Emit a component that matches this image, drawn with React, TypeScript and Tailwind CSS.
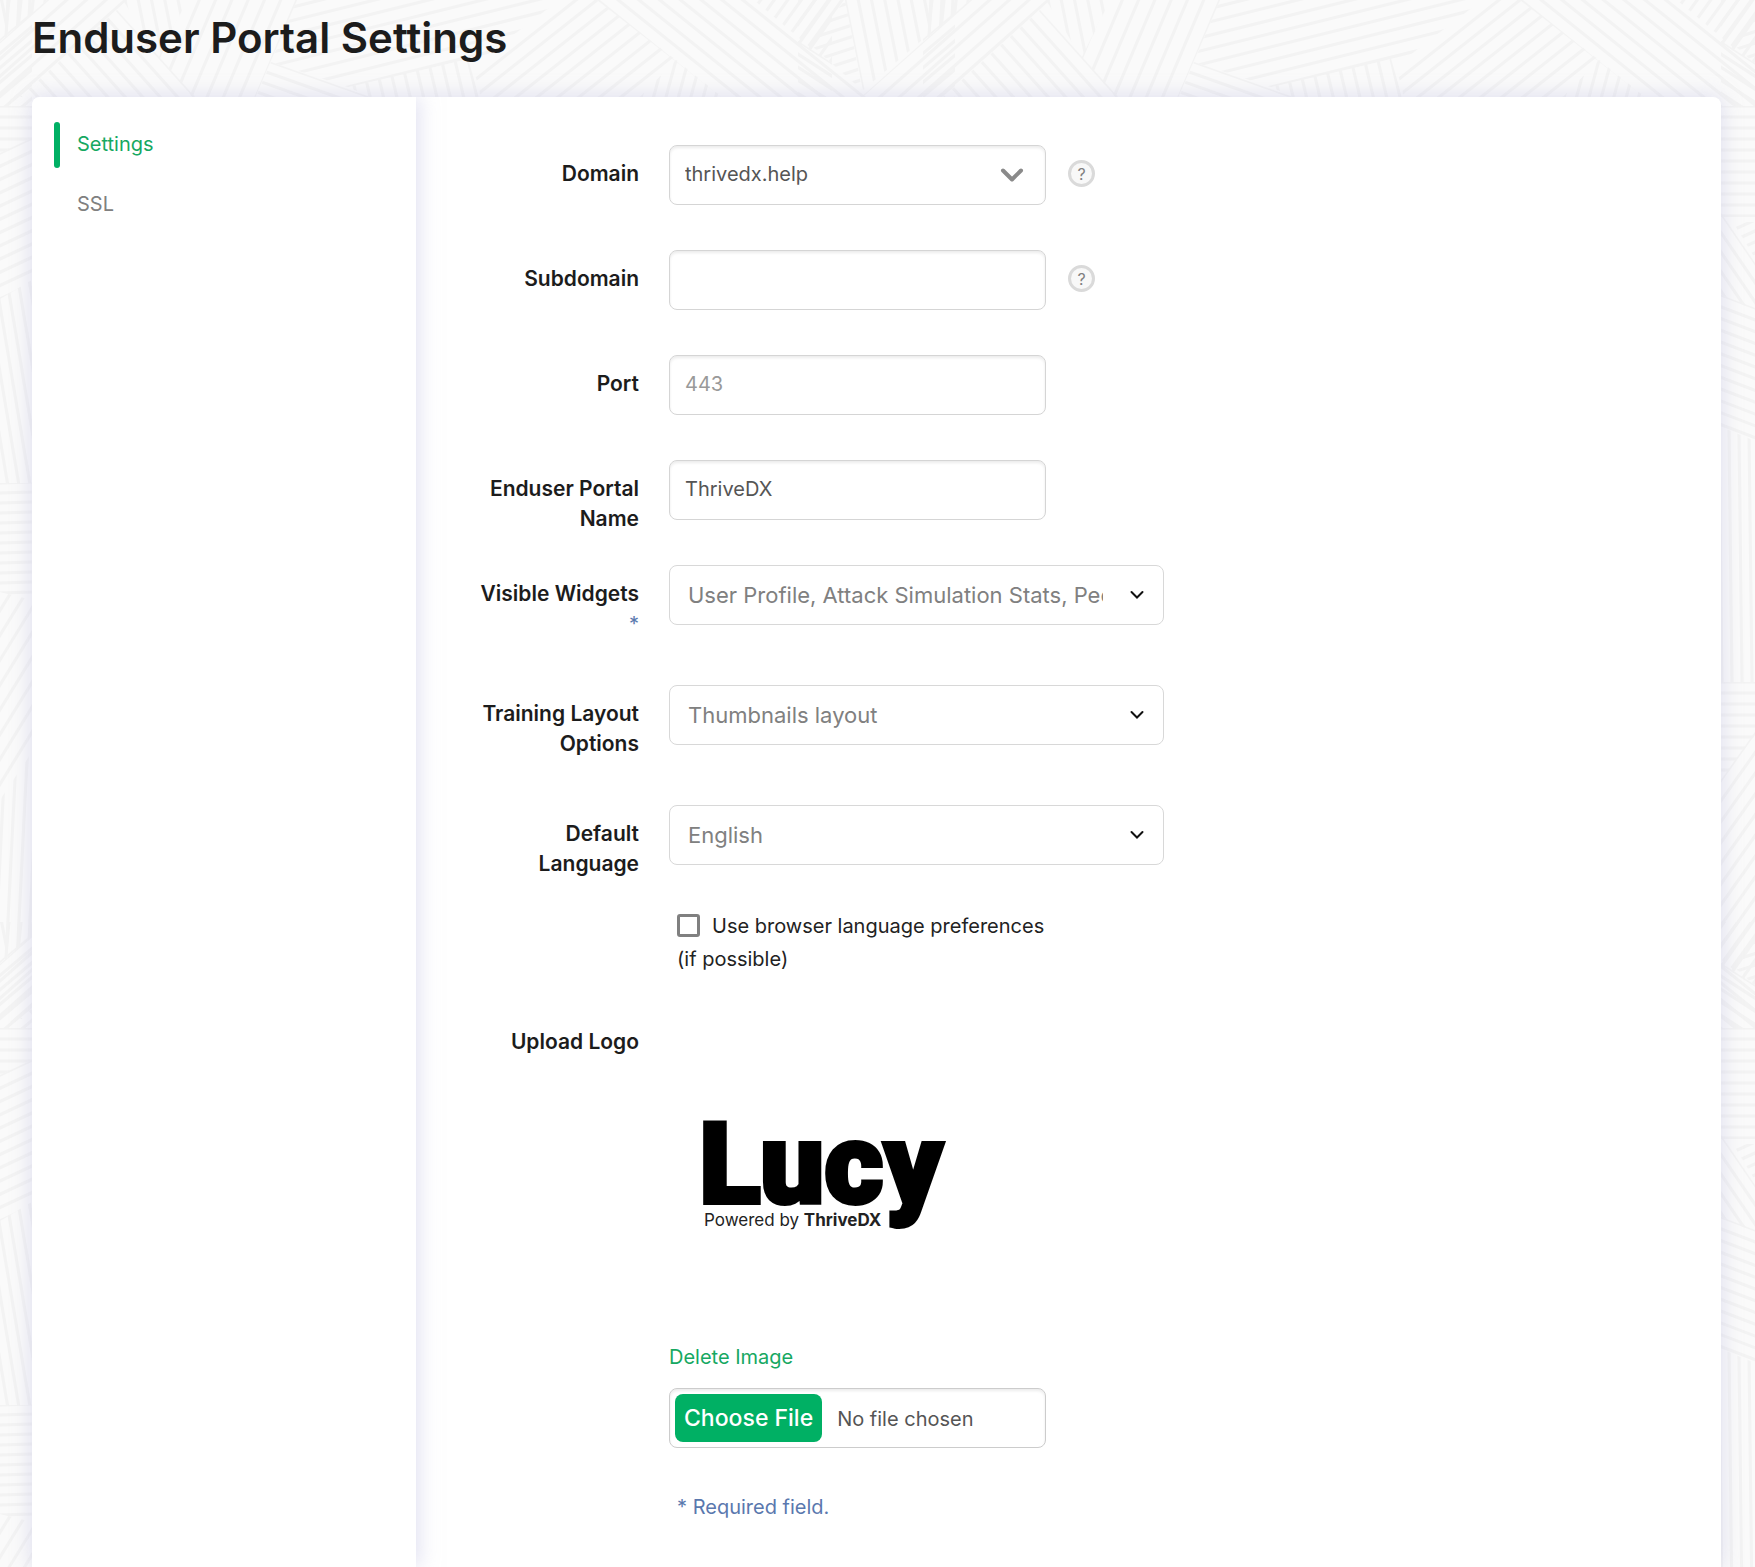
import type { ReactNode } from "react";

type Point = [number, number];

interface Region {
  points: Point[];
  direction: [Point, Point];
  gap: number;
}

const TILE_WIDTH = 923;
const TILE_HEIGHT = 922;

/* Hatched regions of the backdrop: an outline, one line that sets the slope, and the spacing. */
const regions: Region[] = [
  { points: [[481, 97], [474, 70], [559, 0], [597, 0], [676, 60], [640, 97]], direction: [[597, 0], [478, 94]], gap: 13 },
  { points: [[640, 97], [676, 60], [722, 97]], direction: [[676, 60], [666, 97]], gap: 12 },
  { points: [[597, 0], [754, 0], [866, 92], [866, 106], [733, 106]], direction: [[600, 2], [722, 100]], gap: 13 },
  { points: [[754, 0], [845, 0], [811, 48]], direction: [[811, 43], [842, 0]], gap: 11 },
  { points: [[845, 0], [862, 90], [811, 45]], direction: [[811, 50], [851, 37]], gap: 11 },
  { points: [[845, 0], [932, 0], [928, 35], [863, 90]], direction: [[845, 0], [863, 90]], gap: 13 },
  { points: [[932, 0], [970, 0], [928, 38]], direction: [[932, 0], [928, 38]], gap: 12 },
  { points: [[970, 0], [1050, 0], [940, 100], [858, 100]], direction: [[970, 0], [866, 92]], gap: 13 },
  { points: [[1040, 10], [1118, 97], [943, 97]], direction: [[1040, 10], [1118, 97]], gap: 13 },
  { points: [[1046, 0], [1110, 0], [1082, 58]], direction: [[1048, 0], [1053, 25]], gap: 13 },
  { points: [[1110, 0], [1220, 0], [1177, 100], [1118, 100], [1082, 57]], direction: [[1220, 0], [1179, 97]], gap: 15 },
  { points: [[1220, 0], [1482, 0], [1410, 55], [1271, 87], [1194, 62]], direction: [[1412, 52], [1271, 87]], gap: 13 },
  { points: [[1194, 62], [1293, 97], [1179, 97]], direction: [[1194, 62], [1293, 97]], gap: 11 },
  { points: [[1271, 87], [1391, 59], [1402, 97], [1293, 97]], direction: [[1391, 59], [1400, 97]], gap: 13 },
  { points: [[923, 106], [955, 106], [955, 138], [923, 153]], direction: [[923, 106], [955, 106]], gap: 11 },
  { points: [[923, 153], [955, 138], [955, 280], [923, 299]], direction: [[923, 153], [955, 138]], gap: 12 },
  { points: [[923, 299], [955, 280], [955, 483], [923, 483]], direction: [[932, 293], [955, 430]], gap: 11 },
  { points: [[923, 483], [955, 483], [955, 600], [923, 592]], direction: [[923, 483], [955, 482]], gap: 10 },
  { points: [[923, 592], [955, 600], [955, 752], [923, 800]], direction: [[923, 660], [955, 608]], gap: 13 },
  { points: [[923, 800], [955, 752], [955, 934], [923, 961]], direction: [[949, 780], [941, 940]], gap: 11 },
  { points: [[923, 961], [955, 934], [955, 1028], [923, 1028]], direction: [[923, 961], [955, 934]], gap: 11 },
  { points: [[798, 106], [832, 106], [832, 217], [798, 217]], direction: [[798, 106], [832, 106]], gap: 11 },
  { points: [[798, 213], [832, 263], [832, 310], [798, 295]], direction: [[798, 213], [830, 260]], gap: 11 },
  { points: [[810, 222], [832, 222], [832, 258]], direction: [[810, 230], [832, 220]], gap: 10 },
  { points: [[798, 295], [832, 308], [832, 441], [798, 427]], direction: [[798, 295], [832, 308]], gap: 11 },
  { points: [[798, 427], [832, 441], [832, 682], [798, 682]], direction: [[806, 432], [809, 682]], gap: 10 },
  { points: [[798, 682], [832, 682], [832, 735], [798, 780]], direction: [[798, 682], [832, 682]], gap: 11 },
  { points: [[798, 780], [832, 732], [832, 985], [798, 965]], direction: [[798, 780], [832, 732]], gap: 12 },
  { points: [[798, 963], [832, 985], [832, 1028], [798, 1028]], direction: [[798, 963], [832, 985]], gap: 11 },
];

const toPoints = (points: Point[]) => points.map((p) => p.join(",")).join(" ");

function HatchLines({ region }: { region: Region }) {
  const [[x0, y0], [x1, y1]] = region.direction;
  const length = Math.hypot(x1 - x0, y1 - y0);
  const ux = (x1 - x0) / length;
  const uy = (y1 - y0) / length;
  const steps = Array.from({ length: 61 }, (_, i) => i - 30);
  const d = steps
    .map((k) => {
      const cx = x0 - uy * k * region.gap;
      const cy = y0 + ux * k * region.gap;
      return `M${cx - ux * 400} ${cy - uy * 400}L${cx + ux * 400} ${cy + uy * 400}`;
    })
    .join("");
  return <path d={d} stroke="#f3f3f3" strokeWidth={3} fill="none" />;
}

function Backdrop() {
  return (
    <svg className="absolute inset-0 -z-10 h-full w-full" aria-hidden="true">
      <defs>
        {regions.map((region, i) => (
          <clipPath id={`region-${i}`} key={i}>
            <polygon points={toPoints(region.points)} />
          </clipPath>
        ))}
        <g id="hatching">
          {regions.map((region, i) => (
            <g key={i} clipPath={`url(#region-${i})`}>
              <HatchLines region={region} />
            </g>
          ))}
        </g>
        <pattern id="tile" width={TILE_WIDTH} height={TILE_HEIGHT} patternUnits="userSpaceOnUse">
          <rect width={TILE_WIDTH} height={TILE_HEIGHT} fill="#fafafa" />
          <use href="#hatching" />
          <use href="#hatching" x={-TILE_WIDTH} />
          <use href="#hatching" y={-TILE_HEIGHT} />
          <use href="#hatching" x={-TILE_WIDTH} y={-TILE_HEIGHT} />
        </pattern>
      </defs>
      <rect width="100%" height="100%" fill="url(#tile)" />
    </svg>
  );
}

function Chevron({ bold = false }: { bold?: boolean }) {
  return bold ? (
    <svg
      className="pointer-events-none absolute top-[23px] right-[22px] h-[14px] w-[24px]"
      viewBox="0 0 24 14"
      fill="none"
      stroke="#8a8a8a"
      strokeWidth={4}
      strokeLinecap="round"
      strokeLinejoin="round"
      aria-hidden="true"
    >
      <path d="M3 2.5l9 9 9-9" />
    </svg>
  ) : (
    <svg
      className="pointer-events-none absolute top-[25px] right-[20px] h-[10px] w-[14px]"
      viewBox="0 0 14 10"
      fill="none"
      stroke="#111111"
      strokeWidth={2}
      strokeLinecap="round"
      aria-hidden="true"
    >
      <path d="M1.5 2l5.5 5.5L12.5 2" />
    </svg>
  );
}

function HelpButton({ topic }: { topic: string }) {
  return (
    <button
      type="button"
      aria-label={`Help: ${topic}`}
      className="mt-[15px] ml-[22px] flex size-[27px] items-center justify-center rounded-full border-[3px] border-[#dadada] bg-[#f8f8f8] text-base text-[#808080]"
    >
      ?
    </button>
  );
}

const inputClass =
  "h-[60px] w-full max-w-[377px] rounded-lg border border-[#d5d5d5] bg-white px-[15px] pb-[2px] text-xl text-[#555555] shadow-[inset_0_2px_3px_rgba(0,0,0,0.08)] outline-none placeholder:text-[#999999]";

function Row({ label, htmlFor, className, children }: { label: ReactNode; htmlFor: string; className: string; children: ReactNode }) {
  return (
    <div className={`grid grid-cols-[165px_minmax(0,1fr)] gap-[30px] ${className}`}>
      <label htmlFor={htmlFor} className="pt-[14px] text-right text-[21px] leading-[30px] font-semibold text-[#1c1c1c]">
        {label}
      </label>
      {children}
    </div>
  );
}

function WideSelect({ id, value }: { id: string; value: string }) {
  return (
    <div className="relative max-w-[495px]">
      <select
        id={id}
        className="h-[60px] w-full appearance-none overflow-hidden rounded-lg border border-[#d8d8d8] bg-white pr-[60px] pl-[18px] text-[22px] text-[#808080] outline-none"
      >
        <option>{value}</option>
      </select>
      <Chevron />
    </div>
  );
}

function Logo() {
  return (
    <svg className="mt-[47px] ml-[21px] h-[170px] w-[290px]" viewBox="0 0 290 170" role="img" aria-label="Lucy, powered by ThriveDX">
      <text x="9" y="115" fontFamily="Roboto, sans-serif" fontWeight="900" fontSize="114" stroke="#000" strokeWidth="4">
        Lucy
      </text>
      <text x="14" y="138" fontFamily="Inter, sans-serif" fontSize="17" fill="#222">
        Powered by <tspan fontWeight="700">ThriveDX</tspan>
      </text>
    </svg>
  );
}

export default function App() {
  return (
    <div className="relative isolate flex min-h-screen flex-col overflow-hidden px-8 font-[Inter,sans-serif]">
      <Backdrop />
      <h1 className="pt-[13px] pb-[34px] text-[42px] leading-[50px] font-semibold text-[#1c1c1c]">Enduser Portal Settings</h1>

      <div className="mr-[2px] flex flex-1 overflow-hidden rounded-t-lg bg-white shadow-[0_0_20px_rgba(190,190,225,0.5)]">
        <nav className="w-[384px] shrink-0 bg-white pt-[25px] pl-[22px] shadow-[4px_0_18px_rgba(200,200,230,0.5)]">
          <ul className="flex flex-col gap-[14px] text-xl">
            <li className="flex h-[46px] items-center gap-[17px]">
              <span className="h-full w-[6px] rounded-full bg-[#00b064]" />
              <a href="#settings" className="pb-[2px] text-[#16a862]">
                Settings
              </a>
            </li>
            <li className="flex h-[46px] items-center pl-[23px]">
              <a href="#ssl" className="pb-[2px] text-[#808080]">
                SSL
              </a>
            </li>
          </ul>
        </nav>

        <form className="min-w-0 flex-1 pt-12 pr-8 pb-[45px] pl-[58px]">
          <Row label="Domain" htmlFor="domain" className="min-h-[105px]">
            <div className="flex items-start">
              <div className="relative w-full max-w-[377px]">
                <select id="domain" className={`${inputClass} appearance-none`}>
                  <option>thrivedx.help</option>
                </select>
                <Chevron bold />
              </div>
              <HelpButton topic="Domain" />
            </div>
          </Row>
          <Row label="Subdomain" htmlFor="subdomain" className="min-h-[105px]">
            <div className="flex items-start">
              <input id="subdomain" type="text" className={inputClass} />
              <HelpButton topic="Subdomain" />
            </div>
          </Row>
          <Row label="Port" htmlFor="port" className="min-h-[105px]">
            <input id="port" type="text" placeholder="443" className={inputClass} />
          </Row>
          <Row label="Enduser Portal Name" htmlFor="portal-name" className="min-h-[105px]">
            <input id="portal-name" type="text" defaultValue="ThriveDX" className={inputClass} />
          </Row>
          <Row
            label={
              <>
                Visible Widgets <span className="text-xl font-normal text-[#5a78ae]">*</span>
              </>
            }
            htmlFor="widgets"
            className="min-h-[120px]"
          >
            <WideSelect id="widgets" value="User Profile, Attack Simulation Stats, Peer Comparison, Trainings" />
          </Row>
          <Row label="Training Layout Options" htmlFor="layout" className="min-h-[120px]">
            <WideSelect id="layout" value="Thumbnails layout" />
          </Row>
          <Row label="Default Language" htmlFor="language" className="min-h-[208px]">
            <div>
              <WideSelect id="language" value="English" />
              <label className="mt-[45px] ml-2 block max-w-[369px] text-xl leading-[33px] text-[#222222]">
                <input
                  type="checkbox"
                  className="mr-3 -mt-1 inline-block size-[23px] appearance-none rounded-[3px] border-[3px] border-[#808080] bg-white align-middle"
                />
                Use browser language preferences (if possible)
              </label>
            </div>
          </Row>
          <Row label="Upload Logo" htmlFor="logo-file" className="">
            <div>
              <div className="h-[329px] pt-7">
                <Logo />
              </div>
              <button type="button" className="block text-xl leading-[30px] text-[#16a862]">
                Delete Image
              </button>
              <input
                id="logo-file"
                type="file"
                className="mt-4 block h-[60px] w-full max-w-[377px] rounded-lg border border-[#cccccc] bg-white p-[5px] text-xl leading-[48px] text-[#555555] shadow-[inset_0_2px_3px_rgba(0,0,0,0.08)] file:mr-[15px] file:h-12 file:rounded-lg file:bg-[#00b064] file:px-[9px] file:pb-[2px] file:text-[23px] file:font-medium file:text-white"
              />
              <p className="mt-[44px] ml-2 text-xl leading-[30px] text-[#5a78ae]">* Required field.</p>
            </div>
          </Row>
        </form>
      </div>
    </div>
  );
}
